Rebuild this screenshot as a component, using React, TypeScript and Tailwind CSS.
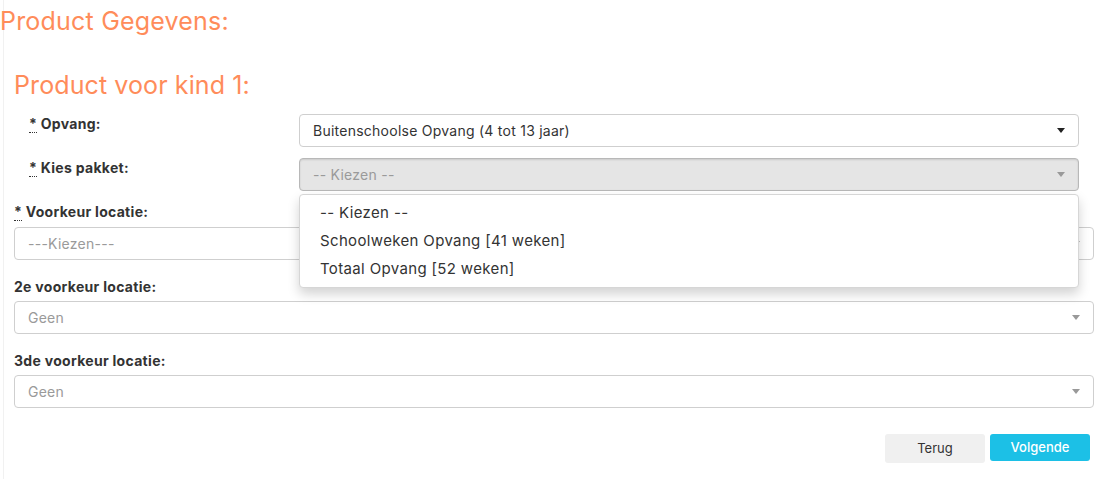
const font = { fontFamily: 'Inter, "Noto Sans", sans-serif' };

function Caret({ muted }: { muted?: boolean }) {
  return (
    <span
      className={`ml-auto h-0 w-0 border-x-[4px] border-t-[5px] border-x-transparent ${
        muted ? 'border-t-[#999]' : 'border-t-[#222]'
      }`}
    />
  );
}

function SelectBox({
  value,
  placeholder,
  disabled,
}: {
  value: string;
  placeholder?: boolean;
  disabled?: boolean;
}) {
  return (
    <div
      className={`flex h-[33px] items-center rounded-[4px] border pl-[13px] pr-[13px] text-[14px] tracking-[0.25px] ${
        disabled
          ? 'border-[#b8b8b8] bg-[#e5e5e5] shadow-[inset_0_1px_2px_rgba(0,0,0,0.12)]'
          : 'border-[#cfcfcf] bg-white'
      } ${placeholder ? 'text-[#9a9a9a]' : 'text-[#333]'}`}
    >
      <span>{value}</span>
      <Caret muted={placeholder} />
    </div>
  );
}

function Label({ children, required }: { children: string; required?: boolean }) {
  return (
    <div className="text-[14px] font-bold leading-5 tracking-[0.3px] text-[#333]">
      {required && (
        <abbr className="no-underline [border-bottom:1px_dotted_#333]" title="verplicht">
          *
        </abbr>
      )}
      {required ? ' ' : ''}
      {children}
    </div>
  );
}

export default function App() {
  return (
    <div className="min-h-[479px] bg-white" style={font}>
      <div className="ml-[3px] min-h-[479px] border-l border-[#f1f1f1]">
        <h1 className="-ml-[4px] flex h-[43px] items-center text-[25px] font-normal tracking-[0.2px] text-[#ff8c5a]">
          Product Gegevens:
        </h1>

        <section className="ml-[10px] mr-[1px]">
          <h2 className="mt-[22px] h-[40px] text-[25px] font-normal leading-[40px] tracking-[0.1px] text-[#ff8c5a]">
            Product voor kind 1:
          </h2>

          <div className="mt-[9px] grid grid-cols-[270px_1fr] px-[15px]">
            <Label required>Opvang:</Label>
            <SelectBox value="Buitenschoolse Opvang (4 tot 13 jaar)" />
          </div>

          <div className="relative mt-[11px] grid grid-cols-[270px_1fr] px-[15px]">
            <Label required>Kies pakket:</Label>
            <div className="relative">
              <SelectBox value="-- Kiezen --" placeholder disabled />
              <ul className="absolute left-0 right-0 top-[36px] z-10 rounded-[4px] border border-[#d6d6d6] bg-white py-[4px] text-[15px] tracking-[0.35px] text-[#333] shadow-[0_6px_12px_rgba(0,0,0,0.175)]">
                <li className="flex h-7 items-center px-[20px]">-- Kiezen --</li>
                <li className="flex h-7 items-center px-[20px]">Schoolweken Opvang [41 weken]</li>
                <li className="flex h-7 items-center px-[20px]">Totaal Opvang [52 weken]</li>
              </ul>
            </div>
          </div>

          <div className="mt-[11px]">
            <Label required>Voorkeur locatie:</Label>
            <div className="mt-[5px]">
              <SelectBox value="---Kiezen---" placeholder />
            </div>
          </div>

          <div className="mt-[17px]">
            <Label>2e voorkeur locatie:</Label>
            <div className="mt-[4px]">
              <SelectBox value="Geen" placeholder />
            </div>
          </div>

          <div className="mt-[17px]">
            <Label>3de voorkeur locatie:</Label>
            <div className="mt-[4px]">
              <SelectBox value="Geen" placeholder />
            </div>
          </div>

          <div className="mt-[26px] flex items-start justify-end gap-[5px] pr-[4px]">
            <button
              type="button"
              className="h-[29px] w-[100px] rounded-[3px] bg-[#f0f0f0] text-[13px] text-[#333]"
            >
              Terug
            </button>
            <button
              type="button"
              className="h-[27px] w-[100px] rounded-[3px] bg-[#1cc0e6] text-[13px] font-medium text-white"
            >
              Volgende
            </button>
          </div>
        </section>
      </div>
    </div>
  );
}
